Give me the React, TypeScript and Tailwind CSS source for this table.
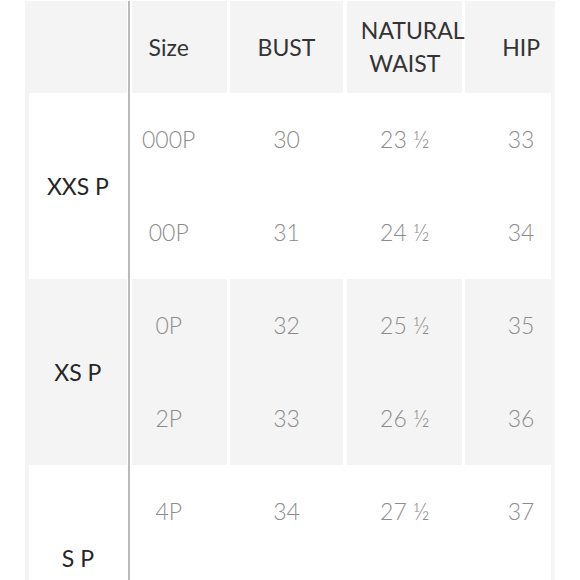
import { clsx } from 'clsx';

/**
 * Petite size chart
 * Alternating white / light-gray row groups, a gray rule after the first column.
 */
interface SizeRow {
  size: string;
  bust: string;
  waist: string;
  hip: string;
}

interface SizeGroup {
  label: string;
  rows: SizeRow[];
}

const GROUPS: SizeGroup[] = [
  {
    label: 'XXS P',
    rows: [
      { size: '000P', bust: '30', waist: '23 ½', hip: '33' },
      { size: '00P', bust: '31', waist: '24 ½', hip: '34' },
    ],
  },
  {
    label: 'XS P',
    rows: [
      { size: '0P', bust: '32', waist: '25 ½', hip: '35' },
      { size: '2P', bust: '33', waist: '26 ½', hip: '36' },
    ],
  },
  {
    label: 'S P',
    rows: [
      { size: '4P', bust: '34', waist: '27 ½', hip: '37' },
      // 다음 줄은 화면 밖이라 비워둔다
      { size: '', bust: '', waist: '', hip: '' },
    ],
  },
];

const GRAY = 'bg-[#f4f4f4]';

const Rule = () => (
  <div className="flex w-[4px] shrink-0 justify-center">
    <div className="w-[2px] bg-[#bababa]" />
  </div>
);

const HeaderRow = () => (
  <div className="flex h-[93px] bg-white pt-[1px] text-[#333333]">
    <div className={clsx('w-[102px]', GRAY)} />
    <Rule />
    <div className={clsx('ml-[1px] flex w-[95px] items-center justify-center pr-[21px]', GRAY)}>
      Size
    </div>
    <div className={clsx('ml-[3px] flex w-[114px] items-center justify-center', GRAY)}>
      BUST
    </div>
    <div
      className={clsx(
        'ml-[4px] flex w-[115px] flex-col items-center justify-center leading-[33px]',
        GRAY,
      )}
    >
      <span className="relative left-[8px] whitespace-nowrap">NATURAL</span>
      <span>WAIST</span>
    </div>
    <div className={clsx('ml-[3px] flex w-[90px] items-center justify-center pl-[22px]', GRAY)}>
      HIP
    </div>
  </div>
);

const Cells = ({
  values,
  className,
}: {
  values: string[];
  className: string;
}) => (
  <div className={clsx('flex flex-col font-light text-[#8c8c8c]', className)}>
    {values.map((value, i) => (
      <div key={i} className="flex h-[93px] items-center justify-center">
        {value}
      </div>
    ))}
  </div>
);

const GroupRow = ({ group, shaded }: { group: SizeGroup; shaded: boolean }) => {
  const bg = shaded ? GRAY : 'bg-white';

  return (
    <div className="flex h-[186px] bg-white">
      <div
        className={clsx(
          'flex w-[102px] items-center justify-center border-l-4 border-[#f4f4f4] text-[#262626]',
          bg,
        )}
      >
        {group.label}
      </div>
      <Rule />
      <Cells
        values={group.rows.map((r) => r.size)}
        className={clsx('ml-[1px] w-[95px] pr-[21px]', bg)}
      />
      <Cells
        values={group.rows.map((r) => r.bust)}
        className={clsx('ml-[3px] w-[114px]', bg)}
      />
      <Cells
        values={group.rows.map((r) => r.waist)}
        className={clsx('ml-[4px] w-[115px]', bg)}
      />
      <Cells
        values={group.rows.map((r) => r.hip)}
        className={clsx('ml-[3px] w-[90px] border-r-4 border-[#f4f4f4] pl-[26px]', bg)}
      />
    </div>
  );
};

const App = () => {
  return (
    <div className="h-[580px] w-[580px] overflow-hidden bg-white font-['Lato','Liberation_Sans',sans-serif] text-[23px]">
      <div className="ml-[25px] w-[530px]">
        <HeaderRow />
        {GROUPS.map((group, i) => (
          <GroupRow key={group.label} group={group} shaded={i % 2 === 1} />
        ))}
      </div>
    </div>
  );
};

export default App;
